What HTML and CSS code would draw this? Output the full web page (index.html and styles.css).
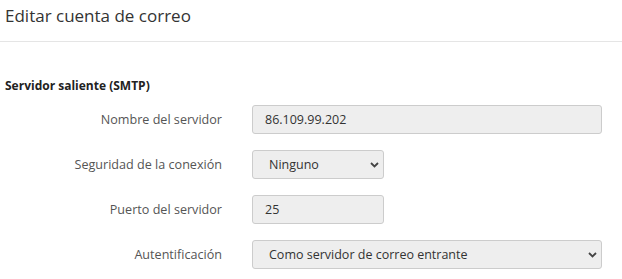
FILE: index.html
```html
<!DOCTYPE html>
<html lang="es">
<head>
    <meta charset="UTF-8">
    <meta name="viewport" content="width=device-width, initial-scale=1.0">
    <title>Editar cuenta de correo</title>
    <link rel="stylesheet" href="styles.css">
</head>
<body>
    <div class="page-header">
        <h1>Editar cuenta de correo</h1>
    </div>

    <form class="account-form">
        <h2>Servidor saliente (SMTP)</h2>

        <div class="form-row">
            <label for="smtpHost">Nombre del servidor</label>
            <input type="text" id="smtpHost" class="field field-wide" value="86.109.99.202">
        </div>

        <div class="form-row">
            <label for="smtpSecurity">Seguridad de la conexión</label>
            <div class="select-wrap field-short">
                <select id="smtpSecurity" class="field">
                    <option>Ninguno</option>
                    <option>SSL/TLS</option>
                    <option>STARTTLS</option>
                </select>
                <svg class="chevron" width="9" height="6" viewBox="0 0 9 6"><path d="M1 1l3.5 3.5L8 1" fill="none" stroke="#444" stroke-width="1.8"/></svg>
            </div>
        </div>

        <div class="form-row">
            <label for="smtpPort">Puerto del servidor</label>
            <input type="text" id="smtpPort" class="field field-short" value="25">
        </div>

        <div class="form-row">
            <label for="smtpAuth">Autentificación</label>
            <div class="select-wrap field-wide">
                <select id="smtpAuth" class="field">
                    <option>Como servidor de correo entrante</option>
                    <option>Ninguna</option>
                </select>
                <svg class="chevron" width="9" height="6" viewBox="0 0 9 6"><path d="M1 1l3.5 3.5L8 1" fill="none" stroke="#444" stroke-width="1.8"/></svg>
            </div>
        </div>
    </form>
</body>
</html>
```

FILE: styles.css
```css
body {
    font-family: "Open Sans", "Noto Sans", sans-serif;
    background-color: #ffffff;
    color: #333;
    margin: 0;
    padding: 0;
}
.page-header {
    padding: 3px 5px 0;
    height: 38px;
    border-bottom: 1px solid #e5e5e5;
}
h1 {
    margin: 0;
    font-size: 17px;
    font-weight: normal;
    color: #333;
    line-height: 26px;
}
.account-form {
    padding: 0 5px;
}
h2 {
    margin: 36px 0 11px;
    font-size: 12px;
    font-weight: bold;
    color: #222;
    line-height: 16px;
}
.form-row {
    display: grid;
    grid-template-columns: 217px auto;
    column-gap: 30px;
    align-items: center;
    height: 29px;
    margin-bottom: 16px;
}
.form-row label {
    text-align: right;
    font-size: 12.6px;
    color: #555;
}
.field {
    height: 29px;
    padding: 0 12px;
    background-color: #eeeeee;
    border: 1px solid #cccccc;
    border-radius: 3px;
    box-sizing: border-box;
    font-family: inherit;
    font-size: 12.5px;
    color: #333;
}
.field-wide {
    width: 350px;
}
.field-short {
    width: 132px;
}
.select-wrap {
    position: relative;
    height: 29px;
}
.select-wrap select {
    width: 100%;
    padding-left: 16px;
    appearance: none;
    -webkit-appearance: none;
}
.chevron {
    position: absolute;
    right: 5px;
    top: 12px;
    pointer-events: none;
}
```
